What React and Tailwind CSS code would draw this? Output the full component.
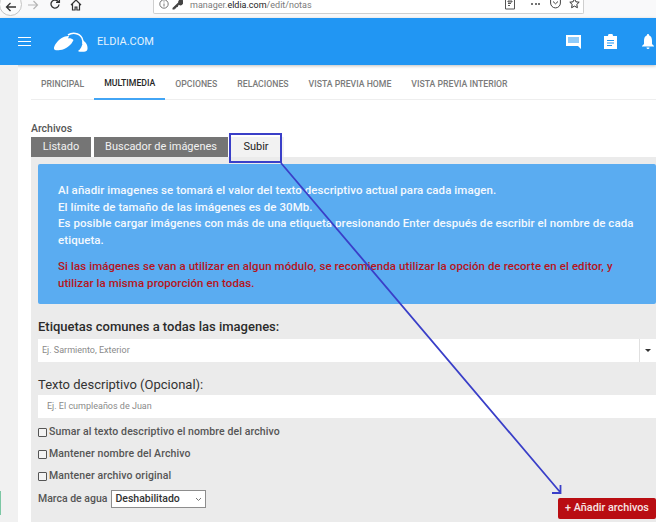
import React from "react";

const F = { fontFamily: "Roboto, sans-serif" };

function Toolbar() {
  return (
    <div className="h-[18px] bg-[#f9f9fa] flex items-start relative overflow-hidden">
      <div className="w-[23px] h-[23px] -mt-[7px] -ml-[1px] rounded-full border border-[#c4c4c4] bg-[#fbfbfb] flex items-center justify-center shrink-0">
        <svg width="12" height="12" viewBox="0 0 12 12" className="mt-[5px]" fill="none" stroke="#333" strokeWidth="1.3"><path d="M11 6H1.5M5.5 2L1.5 6l4 4" /></svg>
      </div>
      <svg width="12" height="12" viewBox="0 0 12 12" className="ml-[5px] -mt-[1px] shrink-0" fill="none" stroke="#b5b5b5" strokeWidth="1.2"><path d="M1 6h9.500M6.500 2l4 4-4 4" /></svg>
      <svg width="12" height="12" viewBox="0 0 12 12" className="ml-[10px] -mt-[2px] shrink-0" fill="none" stroke="#333" strokeWidth="1.3"><path d="M10 6.500A4 4 0 1 1 8.600 3L10 4.200M10.400 1v3.400H7" /></svg>
      <svg width="12" height="12" viewBox="0 0 12 12" className="ml-[9px] -mt-[1px] shrink-0" fill="none" stroke="#333" strokeWidth="1.2"><path d="M1 6l5-5 5 5M2.500 5v6h2.600V8h1.800v3h2.600V5" /></svg>
      <div className="ml-[71px] w-[431px] h-[14px] bg-white border-r border-b border-l border-[#cfcfcf] rounded-b-[2px] flex items-center shrink-0 relative">
        <svg width="10" height="10" viewBox="0 0 10 10" className="ml-[5px] -mt-[5px]" fill="none" stroke="#555" strokeWidth="0.8"><circle cx="5" cy="5" r="4.200" /><path d="M5 4.500v3M5 2.400v1" /></svg>
        <svg width="11" height="11" viewBox="0 0 11 11" className="ml-[3px] -mt-[5px]" fill="#444"><path d="M10 0.500a2.800 2.800 0 0 0-3.800 3L0.500 9v1.500h2l.4-1h1l.5-1.200 1.300-.3 1-2.200a2.800 2.800 0 0 0 3.300-5.300z" /></svg>
        <span className="ml-[7px] -mt-[4px] text-[9px] leading-[12px] text-[#7a7a7a]">
          manager.<span className="text-[#222]">eldia.com</span>/edit/notas
        </span>
        <svg width="10" height="12" viewBox="0 0 10 12" className="absolute left-[351px] -top-[2px]" fill="none" stroke="#555"><path d="M.5.500h9v10.500h-9zM3 3h4v1H3zM3 5.500h3M3 7.500h2" /></svg>
        <div className="absolute left-[377px] top-[3px] flex gap-[1.500px]">
          <i className="w-[2px] h-[2px] bg-[#444] rounded-full block" />
          <i className="w-[2px] h-[2px] bg-[#444] rounded-full block" />
          <i className="w-[2px] h-[2px] bg-[#444] rounded-full block" />
        </div>
        <svg width="11" height="11" viewBox="0 0 11 11" className="absolute left-[396px] -top-[2px]" fill="none" stroke="#444" strokeWidth="1"><path d="M.6.600h9.800v4.400a4.900 4.900 0 0 1-9.800 0zM3 3.500l2.500 2.300L8 3.500" /></svg>
        <svg width="11" height="11" viewBox="0 0 11 11" className="absolute left-[415px] -top-[2px]" fill="none" stroke="#333" strokeWidth="1"><path d="M5.500.8l1.400 3 3.300.4-2.400 2.200.6 3.300-2.900-1.600-2.900 1.600.6-3.300L.8 4.200l3.300-.4z" /></svg>
      </div>
    </div>
  );
}

function Header() {
  return (
    <header className="h-[47px] bg-[#2196f3] flex items-center text-white shadow-[0_1px_3px_rgba(0,0,0,0.25)] relative">
      <div className="ml-[18px] w-[13px] flex flex-col gap-[2.500px]">
        <i className="block h-[1.500px] bg-white" />
        <i className="block h-[1.500px] bg-white" />
        <i className="block h-[1.500px] bg-white" />
      </div>
      <svg width="34" height="20" viewBox="0 0 34 20" className="ml-[23px]" fill="white">
        <path d="M0 15.500C1 11.500 6 6 11 4.500c1.500-.5 3-.8 4-.5l-1 2.500c2-.5 4 .2 5.500 1.500-1 2.500-3 5-5.500 6.800-2.500 2-5 3.200-8 3.200C2 18.800-.5 18 0 15.500z" />
        <path d="M14 3C18 .5 25 .5 28 6c.8 1.800 1.200 4 1 6" fill="none" stroke="white" strokeWidth="1.500" />
        <path d="M24 19c2.500-1.500 4.500-5 5-10.500 3 1.500 5 5 4.500 8.500-.3 1.800-1.500 2.500-3.500 2.700-2 .2-4.500 .2-6-.7z" />
      </svg>
      <span className="ml-[9px] mt-[1px] text-[11px] text-[#e3f2fd]">ELDIA.COM</span>
      <div className="ml-auto mr-[2px] flex items-center">
        <svg width="15" height="15" viewBox="0 0 15 15" fill="white"><path d="M0 1h15v14l-3-3H0zM2 3.500v1h11v-1zM2 5.500v1h11v-1zM2 7.500v1h11v-1z" fillRule="evenodd" /></svg>
        <svg width="13" height="15" viewBox="0 0 13 15" className="ml-[23px]" fill="white"><path d="M0 2h4a2.500 2.500 0 0 1 5 0h4v13H0zM3 6v1h7V6zM3 8.500v1h7v-1zM3 11v1h5v-1z" fillRule="evenodd" /></svg>
        <svg width="12" height="15" viewBox="0 0 12 15" className="ml-[25px]" fill="white"><path d="M6 0a1 1 0 0 1 1 1.200C9.500 2 10 4.500 10 7v3l2 2v.6H0V12l2-2V7c0-2.500.5-5 3-5.800A1 1 0 0 1 6 0zM4.500 13.500h3a1.500 1.500 0 0 1-3 0z" /></svg>
      </div>
    </header>
  );
}

function Tabs() {
  const items = ["PRINCIPAL", "MULTIMEDIA", "OPCIONES", "RELACIONES", "VISTA PREVIA HOME", "VISTA PREVIA INTERIOR"];
  return (
    <nav className="ml-[13px] h-[35px] border-b border-[#eeeeee] flex text-[8.700px] font-medium text-[#7b7b7b]">
      {items.map((t, i) => (
        <div key={t} className={"px-[10px] h-[35px] pt-[4px] flex items-center shrink-0 " + (i === 1 ? "text-[#262626] border-b-2 border-[#42a5f5]" : "")}>
          {t}
        </div>
      ))}
    </nav>
  );
}

function Check({ children }) {
  return (
    <label className="flex items-center h-[22px] text-[10.500px] font-medium text-[#555] tracking-[0.1px]">
      <span className="w-[9px] h-[9px] border border-[#555] rounded-[1px] bg-[#f3f3f3] mr-[2px] shrink-0" />
      {children}
    </label>
  );
}

export default function App() {
  return (
    <div className="w-[656px] h-[522px] bg-white overflow-hidden relative" style={F}>
      <Toolbar />
      <Header />
      <div className="flex h-[457px]">
        <div className="w-[18px] bg-[#f1f1f1] shrink-0 relative">
          <div className="absolute left-0 top-[426px] w-[1px] h-[24px] bg-[#7cc7a4]" />
        </div>
        <main className="flex-1 min-w-0">
          <Tabs />
          <div className="ml-[13px] mt-[22px] text-[10.500px] leading-[14px] font-medium text-[#555]">Archivos</div>
          <div className="ml-[13px] mt-[1px] flex h-[20px] gap-[3px] text-[11px]">
            <div className="w-[60px] pt-[1px] bg-[#757575] text-[#f2f2f2] flex items-center justify-center">Listado</div>
            <div className="w-[134px] pt-[1px] bg-[#757575] text-[#f2f2f2] flex items-center justify-center">Buscador de imágenes</div>
            <div className="w-[53px] pt-[1px] pr-[3px] bg-[#f2f2f2] text-[#222] flex items-center justify-center">Subir</div>
          </div>
          <section className="ml-[13px] h-[400px] bg-[#ebebeb] pl-[7px] pt-[7px]">
            <div className="h-[140px] bg-[#5aacf1] rounded-[2px] pl-[20px] pr-[20px] pt-[18px] text-[11.500px] leading-[16.500px] font-medium tracking-[0.07px] text-[#f4f9fe]">
              <p className="whitespace-nowrap">Al añadir imagenes se tomará el valor del texto descriptivo actual para cada imagen.</p>
              <p className="whitespace-nowrap">El límite de tamaño de las imágenes es de 30Mb.</p>
              <p>Es posible cargar imágenes con más de una etiqueta presionando Enter después de escribir el nombre de cada etiqueta.</p>
              <p className="mt-[10px] text-[#b7141b]">Si las imágenes se van a utilizar en algun módulo, se recomienda utilizar la opción de recorte en el editor, y utilizar la misma proporción en todas.</p>
            </div>
            <h3 className="mt-[13px] text-[13px] leading-[20px] font-medium text-[#2b2b2b]">Etiquetas comunes a todas las imagenes:</h3>
            <div className="mt-[2px] h-[23px] bg-white flex items-center text-[9px] text-[#8a8a8a] pl-[4px]">
              <span className="flex-1 pt-[1px]">Ej. Sarmiento, Exterior</span>
              <span className="w-[17px] h-full border-l border-[#e0e0e0] flex items-center justify-center">
                <i className="block w-0 h-0 border-x-[3px] border-x-transparent border-t-[3px] border-t-[#333]" />
              </span>
            </div>
            <h3 className="mt-[13px] text-[13px] leading-[20px] text-[#333]">Texto descriptivo (Opcional):</h3>
            <div className="h-[23px] bg-white flex items-center text-[9px] text-[#8a8a8a] pl-[9px] pt-[1px]">Ej. El cumpleaños de Juan</div>
            <div className="mt-[3px]">
              <Check>Sumar al texto descriptivo el nombre del archivo</Check>
              <Check>Mantener nombre del Archivo</Check>
              <Check>Mantener archivo original</Check>
            </div>
            <div className="mt-[3px] flex items-start text-[10.500px] font-medium text-[#555]">
              <span className="h-[18px] flex items-center">Marca de agua</span>
              <div className="ml-[4px] w-[95px] h-[18px] bg-white border border-[#8d8d8d] text-[#333] pl-[3px] flex items-center justify-between pr-[3px]">
                Deshabilitado
                <svg width="7" height="5" viewBox="0 0 7 5" fill="none" stroke="#777"><path d="M1 1l2.500 2.500L6 1" /></svg>
              </div>
              <button className="ml-auto mt-[8px] w-[98px] h-[21px] bg-[#b90d12] rounded-[2px] text-[#f7e6e6] text-[10.800px] font-medium flex items-center justify-center">
                + Añadir archivos
              </button>
            </div>
          </section>
        </main>
      </div>

      <div className="absolute left-[229px] top-[133px] w-[53px] h-[30px] border-2 border-[#3a3fc8]" />
      <svg className="absolute left-0 top-0 pointer-events-none" width="656" height="522" fill="none" stroke="#3a3fc8" strokeWidth="1.800">
        <path d="M281 163L560 492M560.500 485L560.500 493L552 493" />
      </svg>
    </div>
  );
}
